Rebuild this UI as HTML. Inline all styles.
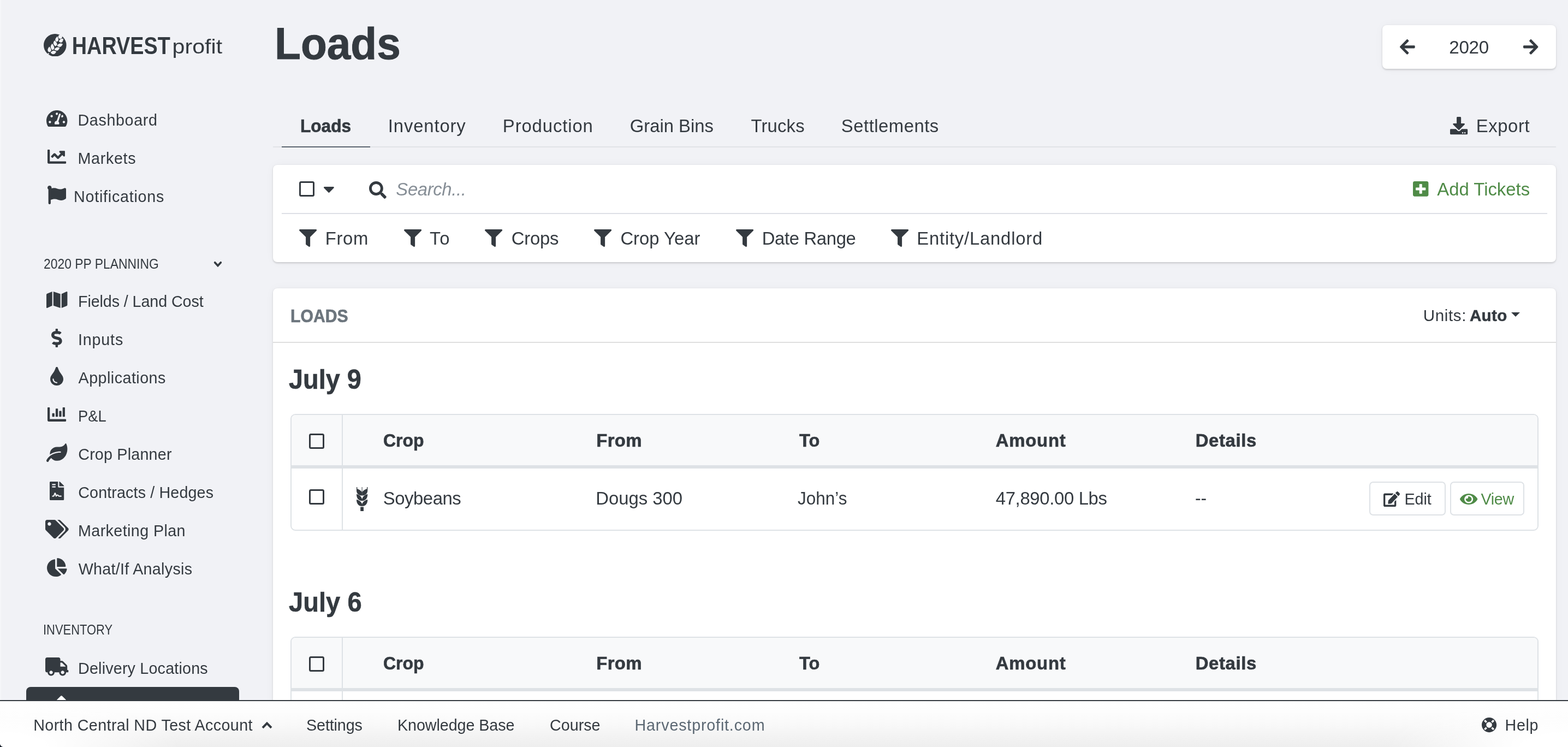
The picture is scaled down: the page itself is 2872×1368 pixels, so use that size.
<!DOCTYPE html>
<html lang="en">
<head>
<meta charset="utf-8">
<title>Loads - Harvest Profit</title>
<style>
*{box-sizing:border-box;margin:0;padding:0}
html,body{width:2872px;height:1368px;overflow:hidden}
body{position:relative;background:#f1f2f6;color:#343a40;font-family:"Liberation Sans",sans-serif;font-size:28px}
ul{list-style:none}
h1,h4{font-weight:700}
h6{font-weight:400;font-size:24px}
a{color:inherit;text-decoration:none}
.t{position:absolute;white-space:nowrap;line-height:1;display:block}
.i{position:absolute;display:block;overflow:visible}
#sidebar{position:absolute;left:0;top:0;width:500px;height:1282px;overflow:hidden}
#main{position:absolute;left:0;top:0;width:2872px;height:1282px;overflow:hidden}
#sidebar{z-index:2}
#sidebar,#main,#bottom{will-change:transform}
#logo_mark{position:absolute;left:80px;top:61.6px;width:41.6px;height:41.6px}
#logo_text{position:absolute;left:133.6px;top:61.8px;width:280px;height:50px;overflow:visible}
#active{position:absolute;left:48px;top:1258px;width:390px;height:60px;background:#343a40;border-radius:8px}
#active i{position:absolute;left:57.9px;top:18.4px;width:13px;height:13px;background:#fff;transform:rotate(45deg);border-radius:2px}
.card{position:absolute;background:#fff;border-radius:8px;box-shadow:0 1.5px 3.5px rgba(0,0,0,.17),0 0 18px rgba(0,0,0,.035)}
#yearbox{left:2532px;top:46px;width:318px;height:80px}
#tabline{position:absolute;left:500px;top:268px;width:2350px;height:2px;background:#e1e3e7}
#tabactive{position:absolute;left:516px;top:264px;width:162px;height:6px;border-bottom:2px solid #5c6670}
#filters{left:500px;top:302px;width:2350px;height:178px}
#fdiv{position:absolute;left:516px;top:390px;width:2318px;height:2px;background:#dde0e6}
#loads{left:500px;top:528px;width:2350px;height:800px;border-radius:8px 8px 0 0}
#ldiv{position:absolute;left:500px;top:626px;width:2350px;height:2px;background:#dfdfdf}
.chk{position:absolute;width:28px;height:28px;border:3px solid #343a40;border-radius:3.5px;display:block}
#chk_all{left:548px;top:332px}
#chk_h1{left:566px;top:794px}
#chk_r1{left:566px;top:896px}
#chk_h2{left:566px;top:1202px}
.table{position:absolute;left:532px;width:2286px;border:2px solid #dee2e6;border-radius:9px;overflow:hidden;background:#fff}
#table1{top:758px;height:214px}
#table2{top:1166px;height:300px}
.thead{position:absolute;left:0;top:0;width:100%;height:98px;background:#f8f9fa;border-bottom:6px solid #dee2e6}
.vline{position:absolute;left:92px;top:0;width:2px;height:100%;background:#dee2e6}
.btn{position:absolute;top:882px;height:62px;border:2px solid #dee2e6;border-radius:7px;background:#fff}
#btn_edit{left:2508px;width:140px}
#btn_view{left:2656px;width:136px}
#ucaret{position:absolute;left:2768.2px;top:572px;width:0;height:0;border-left:8.8px solid transparent;border-right:8.8px solid transparent;border-top:8.6px solid #343a40}
#i_wheat{left:653px;top:891.9px;width:20.3px;height:44px;fill:#343a40}
#bottom{position:absolute;left:0;top:1282px;width:2872px;height:86px;border-top:2px solid #343a40;overflow:hidden;z-index:5;background:radial-gradient(ellipse 330px 100px at 0% 100%,#fff 25%,rgba(255,255,255,0) 100%),radial-gradient(ellipse 330px 100px at 100% 100%,#fff 25%,rgba(255,255,255,0) 100%),linear-gradient(to bottom,#fff 0%,#fdfdfd 22%,#f9f9f9 50%,#f3f3f3 76%,#eeeeee 100%)}
#corner{position:absolute;left:0;bottom:0;width:7px;height:7px;background:radial-gradient(circle at 100% 0%,rgba(20,28,40,0) 6.6px,#141c28 7.6px)}
#edge{position:absolute;left:0;top:0;width:2px;height:1282px;background:#f5f6f9;z-index:3}
.chv{position:absolute;overflow:visible;fill:none;stroke:#343a40}
#s_dash{left:142.44px;top:206.00px;font-size:28.73px;letter-spacing:0.625px;}
#s_mark{left:142.44px;top:276.00px;font-size:28.73px;letter-spacing:0.669px;}
#s_noti{left:134.94px;top:346.00px;font-size:28.73px;letter-spacing:0.752px;}
#s_plan{left:79.72px;top:471.00px;font-size:24.91px;letter-spacing:0.000px;transform:scaleX(0.9190);transform-origin:0 0;}
#s_fld{left:143.02px;top:538.00px;font-size:28.73px;letter-spacing:-0.109px;}
#s_inp{left:143.02px;top:608.00px;font-size:28.73px;letter-spacing:0.800px;}
#s_app{left:143.52px;top:678.00px;font-size:28.73px;letter-spacing:0.457px;}
#s_pl{left:143.02px;top:748.00px;font-size:28.73px;letter-spacing:0.000px;transform:scaleX(0.9502);transform-origin:0 0;}
#s_crop{left:143.21px;top:818.00px;font-size:28.73px;letter-spacing:0.184px;}
#s_con{left:143.21px;top:888.00px;font-size:28.73px;letter-spacing:0.118px;}
#s_mkt{left:143.02px;top:958.00px;font-size:28.73px;letter-spacing:0.381px;}
#s_wif{left:143.67px;top:1028.00px;font-size:28.73px;letter-spacing:0.272px;}
#s_inv{left:78.96px;top:1141.00px;font-size:24.91px;letter-spacing:0.000px;transform:scaleX(0.8802);transform-origin:0 0;}
#s_del{left:143.02px;top:1209.60px;font-size:28.73px;letter-spacing:0.176px;}
#h1{left:503.00px;top:39.00px;font-size:82.08px;letter-spacing:0.000px;transform:scaleX(0.9551);transform-origin:0 0;font-weight:700;-webkit-text-stroke:0.98px;}
#yr{left:2654.25px;top:70.00px;font-size:33.22px;letter-spacing:-0.333px;}
#tab_loads{left:550.28px;top:215.00px;font-size:32.83px;letter-spacing:0.000px;transform:scaleX(0.9627);transform-origin:0 0;font-weight:700;-webkit-text-stroke:0.66px;}
#tab_inv{left:710.75px;top:215.00px;font-size:32.83px;letter-spacing:0.875px;}
#tab_prod{left:920.86px;top:215.00px;font-size:32.83px;letter-spacing:0.886px;}
#tab_bins{left:1153.75px;top:215.00px;font-size:32.83px;letter-spacing:-0.006px;}
#tab_trk{left:1375.38px;top:215.00px;font-size:32.83px;letter-spacing:0.200px;}
#tab_set{left:1540.86px;top:215.00px;font-size:32.83px;letter-spacing:0.500px;}
#export{left:2703.75px;top:215.00px;font-size:32.83px;letter-spacing:0.600px;}
#search{left:725.36px;top:331.00px;font-size:32.83px;letter-spacing:-0.360px;font-style:italic;color:#868e96;}
#addt{left:2632.36px;top:331.00px;font-size:32.83px;letter-spacing:-0.000px;color:#4f8b47;}
#f_from{left:595.80px;top:421.00px;font-size:32.83px;letter-spacing:0.666px;}
#f_to{left:786.88px;top:421.00px;font-size:32.83px;letter-spacing:2.000px;}
#f_crops{left:936.86px;top:421.00px;font-size:32.83px;letter-spacing:-0.250px;}
#f_cy{left:1136.38px;top:421.00px;font-size:32.83px;letter-spacing:-0.000px;}
#f_dr{left:1395.75px;top:421.00px;font-size:32.83px;letter-spacing:-0.345px;}
#f_el{left:1679.25px;top:421.00px;font-size:32.83px;letter-spacing:0.784px;}
#loads_h{left:532.30px;top:562.00px;font-size:33.22px;letter-spacing:0.000px;transform:scaleX(0.9085);transform-origin:0 0;font-weight:700;-webkit-text-stroke:0.66px;color:#6c757d;}
#units{left:2606.82px;top:563.00px;font-size:29.55px;letter-spacing:0.600px;}
#auto{left:2691.95px;top:563.00px;font-size:29.55px;letter-spacing:0.334px;font-weight:700;-webkit-text-stroke:0.59px;}
#july9{left:528.71px;top:670.00px;font-size:49.25px;letter-spacing:0.000px;transform:scaleX(0.9516);transform-origin:0 0;font-weight:700;-webkit-text-stroke:0.59px;}
#th1_crop{left:701.68px;top:791.00px;font-size:32.83px;letter-spacing:0.000px;transform:scaleX(0.9741);transform-origin:0 0;font-weight:700;-webkit-text-stroke:0.66px;}
#th1_from{left:1092.36px;top:791.00px;font-size:32.83px;letter-spacing:0.336px;font-weight:700;-webkit-text-stroke:0.66px;}
#th1_to{left:1464.36px;top:791.00px;font-size:32.83px;letter-spacing:0.000px;transform:scaleX(0.9883);transform-origin:0 0;font-weight:700;-webkit-text-stroke:0.66px;}
#th1_amt{left:1823.75px;top:791.00px;font-size:32.83px;letter-spacing:0.800px;font-weight:700;-webkit-text-stroke:0.66px;}
#th1_det{left:2189.68px;top:791.00px;font-size:32.83px;letter-spacing:0.665px;font-weight:700;-webkit-text-stroke:0.66px;}
#th2_crop{left:701.68px;top:1199.00px;font-size:32.83px;letter-spacing:0.000px;transform:scaleX(0.9741);transform-origin:0 0;font-weight:700;-webkit-text-stroke:0.66px;}
#th2_from{left:1092.36px;top:1199.00px;font-size:32.83px;letter-spacing:0.336px;font-weight:700;-webkit-text-stroke:0.66px;}
#th2_to{left:1464.36px;top:1199.00px;font-size:32.83px;letter-spacing:0.000px;transform:scaleX(0.9883);transform-origin:0 0;font-weight:700;-webkit-text-stroke:0.66px;}
#th2_amt{left:1823.75px;top:1199.00px;font-size:32.83px;letter-spacing:0.800px;font-weight:700;-webkit-text-stroke:0.66px;}
#th2_det{left:2189.68px;top:1199.00px;font-size:32.83px;letter-spacing:0.665px;font-weight:700;-webkit-text-stroke:0.66px;}
#td_soy{left:701.68px;top:897.00px;font-size:32.83px;letter-spacing:-0.420px;}
#td_dougs{left:1091.36px;top:897.00px;font-size:32.83px;letter-spacing:-0.015px;}
#td_john{left:1461.36px;top:897.00px;font-size:32.83px;letter-spacing:0.000px;transform:scaleX(0.9584);transform-origin:0 0;}
#td_amt{left:1823.75px;top:897.00px;font-size:32.83px;letter-spacing:-0.327px;}
#td_dd{left:2189.18px;top:897.00px;font-size:32.83px;letter-spacing:0.000px;transform:scaleX(0.9702);transform-origin:0 0;}
#edit{left:2572.39px;top:900.00px;font-size:28.73px;letter-spacing:-0.005px;}
#view{left:2712.52px;top:900.00px;font-size:28.73px;letter-spacing:-0.333px;color:#4f8b47;}
#july6{left:528.55px;top:1078.00px;font-size:49.25px;letter-spacing:0.000px;transform:scaleX(0.9573);transform-origin:0 0;font-weight:700;-webkit-text-stroke:0.59px;}
#b_acct{left:61.16px;top:30.00px;font-size:28.73px;letter-spacing:0.388px;}
#b_set{left:561.10px;top:30.00px;font-size:28.73px;letter-spacing:-0.140px;}
#b_kb{left:728.02px;top:30.00px;font-size:28.73px;letter-spacing:-0.085px;}
#b_course{left:1007.02px;top:30.00px;font-size:28.73px;letter-spacing:-0.000px;}
#b_hp{left:1162.51px;top:30.00px;font-size:28.73px;letter-spacing:0.814px;color:#5c6873;}
#b_help{left:2756.51px;top:30.00px;font-size:28.73px;letter-spacing:0.670px;}
#i_dash{left:84.70px;top:201.90px;width:38.40px;height:30.10px;fill:#343a40}
#i_mark{left:86.90px;top:274.10px;width:34.10px;height:25.70px;fill:#343a40}
#i_flag{left:87.30px;top:340.10px;width:34.00px;height:33.90px;fill:#343a40}
#i_map{left:84.70px;top:533.90px;width:38.40px;height:30.10px;fill:#343a40}
#i_dollar{left:94.10px;top:602.00px;width:19.70px;height:34.10px;fill:#343a40}
#i_tint{left:91.90px;top:671.80px;width:24.00px;height:34.10px;fill:#343a40}
#i_bar{left:86.90px;top:746.00px;width:34.10px;height:25.90px;fill:#343a40}
#i_leaf{left:84.70px;top:812.00px;width:38.40px;height:34.00px;fill:#343a40}
#i_file{left:90.80px;top:881.80px;width:26.20px;height:34.10px;fill:#343a40}
#i_tags{left:82.60px;top:952.10px;width:42.70px;height:34.10px;fill:#343a40}
#i_pie{left:85.80px;top:1022.00px;width:36.60px;height:34.10px;fill:#343a40}
#i_truck{left:82.60px;top:1204.40px;width:42.30px;height:33.60px;fill:#343a40}
#i_al{left:2564.30px;top:72.20px;width:27.70px;height:27.70px;fill:#343a40}
#i_ar{left:2790.30px;top:72.20px;width:27.40px;height:27.70px;fill:#343a40}
#i_dl{left:2656.00px;top:213.70px;width:32.20px;height:32.30px;fill:#343a40}
#i_caret{left:592.50px;top:342.00px;width:18.80px;height:11.00px;fill:#343a40}
#i_search{left:676.00px;top:331.90px;width:31.80px;height:31.90px;fill:#343a40}
#i_plus{left:2587.80px;top:332.00px;width:28.40px;height:27.80px;fill:#4f8b47}
#i_f0{left:547.80px;top:420.00px;width:32.20px;height:32.00px;fill:#343a40}
#i_f1{left:740.00px;top:420.00px;width:32.20px;height:32.00px;fill:#343a40}
#i_f2{left:887.90px;top:420.00px;width:32.20px;height:32.00px;fill:#343a40}
#i_f3{left:1087.80px;top:420.00px;width:32.20px;height:32.00px;fill:#343a40}
#i_f4{left:1348.20px;top:420.00px;width:32.20px;height:32.00px;fill:#343a40}
#i_f5{left:1632.10px;top:420.00px;width:32.20px;height:32.00px;fill:#343a40}
#i_edit{left:2534.00px;top:899.80px;width:30.00px;height:28.10px;fill:#343a40}
#i_eye{left:2674.00px;top:904.00px;width:32.30px;height:20.10px;fill:#4f8b47}
#i_ring{left:2714.20px;top:30.30px;width:27.20px;height:27.20px;fill:#343a40}
</style>
</head>
<body>
<nav id="sidebar">
<a id="logo"><svg id="logo_mark" viewBox="0 0 41.6 41.6"><circle cx="20.8" cy="20.8" r="20.8" fill="#343a40"/><g fill="#f1f2f6"><circle cx="30.3" cy="5.3" r="3.6"/><circle cx="8.6" cy="36.4" r="1.2"/><path d="M25.1 4.4Q17.8 11.7 24.2 14.6Q29.6 12.7 25.1 4.4ZM19.9 12.1Q15.0 18.0 21.3 22.7Q28.6 20.0 19.9 12.1ZM15.6 17.7Q9.8 24.0 16.1 29.8Q22.9 26.9 15.6 17.7ZM10.4 23.2Q4.2 29.9 10.0 33.5Q17.4 31.6 10.4 23.2ZM36.2 9.0Q30.0 7.8 27.7 13.9Q34.5 19.8 36.2 9.0ZM35.0 18.7Q29.1 15.2 24.4 21.4Q30.7 27.6 35.0 18.7ZM29.4 25.5Q24.1 22.4 19.2 28.2Q25.5 34.4 29.4 25.5ZM23.2 32.4Q17.1 28.4 12.6 34.4Q18.7 41.0 23.2 32.4Z"/></g></svg><svg id="logo_text" viewBox="0 0 280 50"><text x="-2.2" y="37.2" font-family="Liberation Sans, sans-serif" font-weight="700" font-size="44.6" textLength="180" lengthAdjust="spacingAndGlyphs" fill="#343a40">HARVEST</text><text x="181.6" y="36.4" font-family="Liberation Sans, sans-serif" font-size="36.2" textLength="91.5" lengthAdjust="spacingAndGlyphs" fill="#343a40">profit</text></svg></a>
<ul class="nav">
<li><a><svg class="i" id="i_dash" viewBox="0.00 32.00 576.00 448.00" preserveAspectRatio="none"><path d="M288 32C128.940 32 0 160.940 0 320c0 52.800 14.250 102.260 39.060 144.800 5.610 9.620 16.300 15.200 27.440 15.200h443c11.140 0 21.830-5.580 27.440-15.200C561.750 422.260 576 372.800 576 320c0-159.060-128.940-288-288-288zm0 64c14.710 0 26.580 10.130 30.320 23.650-1.110 2.260-2.640 4.230-3.450 6.670l-9.220 27.670c-5.130 3.490-10.970 6.010-17.640 6.010-17.670 0-32-14.330-32-32S270.330 96 288 96zM96 384c-17.670 0-32-14.330-32-32s14.330-32 32-32 32 14.330 32 32-14.330 32-32 32zm48-160c-17.670 0-32-14.330-32-32s14.330-32 32-32 32 14.330 32 32-14.330 32-32 32zm246.770-72.410l-61.330 184C343.130 347.330 352 364.540 352 384c0 11.720-3.380 22.550-8.880 32H232.880c-5.500-9.450-8.880-20.280-8.880-32 0-33.940 26.500-61.430 59.900-63.590l61.340-184.010c4.170-12.560 17.730-19.450 30.360-15.170 12.570 4.190 19.350 17.790 15.170 30.360zm14.660 57.200l15.520-46.550c3.470-1.290 7.130-2.230 11.050-2.230 17.670 0 32 14.330 32 32s-14.330 32-32 32c-11.380-.010-20.890-6.280-26.570-15.220zM480 384c-17.670 0-32-14.330-32-32s14.330-32 32-32 32 14.330 32 32-14.330 32-32 32z"/></svg><span class="t" id="s_dash">Dashboard</span></a></li>
<li><a><svg class="i" id="i_mark" viewBox="0.00 64.00 512.00 384.00" preserveAspectRatio="none"><path d="M496 384H64V80c0-8.840-7.160-16-16-16H16C7.160 64 0 71.160 0 80v336c0 17.670 14.330 32 32 32h464c8.840 0 16-7.160 16-16v-32c0-8.840-7.160-16-16-16zM464 96H345.940c-21.380 0-32.090 25.850-16.970 40.970l32.400 32.400L288 242.750l-73.370-73.370c-12.500-12.500-32.760-12.500-45.250 0l-68.690 68.690c-6.250 6.250-6.250 16.380 0 22.630l22.620 22.620c6.250 6.250 16.380 6.250 22.630 0L192 237.250l73.370 73.370c12.500 12.500 32.760 12.500 45.250 0l96-96 32.400 32.400c15.120 15.120 40.970 4.410 40.970-16.970V112c.010-8.840-7.150-16-15.990-16z"/></svg><span class="t" id="s_mark">Markets</span></a></li>
<li><a><svg class="i" id="i_flag" viewBox="8.00 0.00 504.00 512.00" preserveAspectRatio="none"><path d="M349.565 98.783C295.978 98.783 251.721 64 184.348 64c-24.955 0-47.309 4.384-68.045 12.013a55.947 55.947 0 0 0 3.586-23.562C118.117 24.015 94.806 1.206 66.338.048 34.345-1.254 8 24.296 8 56c0 19.026 9.497 35.825 24 45.945V488c0 13.255 10.745 24 24 24h16c13.255 0 24-10.745 24-24v-94.400c28.311-12.064 63.582-22.122 114.435-22.122 53.588 0 97.844 34.783 165.217 34.783 48.169 0 86.667-16.294 122.505-40.858C506.840 359.452 512 349.571 512 339.045v-243.100c0-23.393-24.269-38.870-45.485-29.016-34.338 15.948-76.454 31.854-116.950 31.854z"/></svg><span class="t" id="s_noti">Notifications</span></a></li>
</ul>
<h6><span class="t" id="s_plan">2020 PP PLANNING</span><svg class="chv" id="i_chev" style="left:380px;top:470px;width:40px;height:30px" viewBox="380 470 40 30"><path d="M393.6 480.7 L399 486.5 L404.4 480.7" stroke-width="3.6" stroke-linecap="round" stroke-linejoin="miter"/></svg></h6>
<ul class="nav">
<li><a><svg class="i" id="i_map" viewBox="0.00 32.00 576.00 448.00" preserveAspectRatio="none"><path d="M0 117.660v346.320c0 11.320 11.430 19.060 21.940 14.860L160 416V32L20.120 87.950A32.006 32.006 0 0 0 0 117.660zM192 416l192 64V96L192 32v384zM554.060 33.160L416 96v384l139.880-55.950A31.996 31.996 0 0 0 576 394.340V48.020c0-11.320-11.430-19.060-21.940-14.860z"/></svg><span class="t" id="s_fld">Fields / Land Cost</span></a></li>
<li><a><svg class="i" id="i_dollar" viewBox="0.04 0.00 287.94 512.00" preserveAspectRatio="none"><path d="M209.2 233.4l-108-31.600C88.700 198.200 80 186.500 80 173.500c0-16.300 13.200-29.500 29.500-29.500h66.300c12.200 0 24.200 3.700 34.200 10.500 6.100 4.100 14.300 3.100 19.500-2l34.800-34c7.100-6.900 6.100-18.400-1.800-24.500C238 74.800 207.400 64.100 176 64V16c0-8.800-7.200-16-16-16h-32c-8.800 0-16 7.200-16 16v48h-2.500C45.800 64-5.400 118.700.5 183.600c4.200 46.100 39.400 83.600 83.800 96.600l102.500 30c12.500 3.700 21.200 15.300 21.200 28.300 0 16.300-13.200 29.500-29.500 29.500h-66.300C100 368 88 364.300 78 357.500c-6.100-4.100-14.300-3.100-19.500 2l-34.800 34c-7.100 6.900-6.100 18.400 1.800 24.500 24.500 19.200 55.100 29.900 86.500 30v48c0 8.800 7.200 16 16 16h32c8.800 0 16-7.200 16-16v-48.200c46.600-.9 90.300-28.600 105.700-72.700 21.500-61.600-14.600-124.800-72.500-141.700z"/></svg><span class="t" id="s_inp">Inputs</span></a></li>
<li><a><svg class="i" id="i_tint" viewBox="0.00 -0.00 352.00 512.00" preserveAspectRatio="none"><path d="M205.22 22.090c-7.940-28.780-49.440-30.120-58.440 0C100.010 179.850 0 222.720 0 333.910 0 432.350 78.720 512 176 512s176-79.650 176-178.090c0-111.750-99.790-153.340-146.780-311.820zM176 448c-61.750 0-112-50.250-112-112 0-8.840 7.160-16 16-16s16 7.160 16 16c0 44.110 35.890 80 80 80 8.840 0 16 7.160 16 16s-7.160 16-16 16z"/></svg><span class="t" id="s_app">Applications</span></a></li>
<li><a><svg class="i" id="i_bar" viewBox="0.00 64.00 512.00 384.00" preserveAspectRatio="none"><path d="M332.8 320h38.400c6.400 0 12.800-6.400 12.800-12.800V172.800c0-6.400-6.400-12.800-12.800-12.800h-38.400c-6.400 0-12.800 6.400-12.800 12.800v134.400c0 6.400 6.400 12.800 12.800 12.800zm96 0h38.400c6.400 0 12.800-6.400 12.800-12.800V76.800c0-6.400-6.400-12.800-12.800-12.800h-38.400c-6.400 0-12.800 6.400-12.800 12.800v230.400c0 6.400 6.400 12.800 12.800 12.800zm-288 0h38.400c6.400 0 12.800-6.400 12.800-12.800v-70.400c0-6.400-6.400-12.800-12.800-12.800h-38.400c-6.400 0-12.800 6.400-12.800 12.800v70.400c0 6.400 6.400 12.800 12.800 12.800zm96 0h38.400c6.400 0 12.800-6.400 12.800-12.800V108.800c0-6.400-6.400-12.800-12.800-12.800h-38.400c-6.400 0-12.800 6.400-12.800 12.800v198.400c0 6.400 6.400 12.800 12.800 12.800zM496 384H64V80c0-8.840-7.160-16-16-16H16C7.160 64 0 71.160 0 80v336c0 17.670 14.330 32 32 32h464c8.840 0 16-7.160 16-16v-32c0-8.840-7.160-16-16-16z"/></svg><span class="t" id="s_pl">P&amp;L</span></a></li>
<li><a><svg class="i" id="i_leaf" viewBox="0.05 -0.02 575.95 512.07" preserveAspectRatio="none"><path d="M546.2 9.700c-5.600-12.500-21.600-13-28.300-1.200C486.900 62.400 431.400 96 368 96h-80C182 96 96 182 96 288c0 7 .800 13.700 1.500 20.500C161.300 262.800 253.400 224 384 224c8.800 0 16 7.200 16 16s-7.200 16-16 16C132.600 256 26 410.100 2.400 468c-6.600 16.300 1.200 34.900 17.500 41.600 16.400 6.800 35-1.100 41.800-17.300 1.500-3.600 20.900-47.900 71.900-90.600 32.400 43.900 94 85.800 174.900 77.200C465.500 467.500 576 326.700 576 154.300c0-50.200-10.800-102.200-29.800-144.600z"/></svg><span class="t" id="s_crop">Crop Planner</span></a></li>
<li><a><svg class="i" id="i_file" viewBox="0.00 0.00 384.00 512.00" preserveAspectRatio="none"><path d="M224 136V0H24C10.700 0 0 10.700 0 24v464c0 13.300 10.700 24 24 24h336c13.300 0 24-10.700 24-24V160H248c-13.200 0-24-10.800-24-24zM64 72c0-4.420 3.580-8 8-8h80c4.420 0 8 3.580 8 8v16c0 4.420-3.580 8-8 8H72c-4.420 0-8-3.580-8-8V72zm0 64c0-4.420 3.580-8 8-8h80c4.420 0 8 3.580 8 8v16c0 4.420-3.580 8-8 8H72c-4.420 0-8-3.580-8-8v-16zm192.810 248H304c8.840 0 16 7.160 16 16s-7.160 16-16 16h-47.190c-16.450 0-31.270-9.140-38.640-23.860-2.950-5.920-8.090-6.520-10.170-6.520s-7.220.590-10.020 6.190l-7.670 15.340a15.986 15.986 0 0 1-14.310 8.840c-.380 0-.750-.020-1.140-.050-6.450-.450-12-4.750-14.030-10.890L144 354.590l-10.610 31.880c-5.890 17.660-22.380 29.530-41 29.530H80c-8.840 0-16-7.160-16-16s7.160-16 16-16h12.390c4.830 0 9.110-3.080 10.640-7.660l18.190-54.640c3.300-9.810 12.440-16.410 22.780-16.410s19.480 6.590 22.770 16.410l13.880 41.640c19.770-16.190 54.050-9.700 66 14.160 2.020 4.060 5.960 6.500 10.160 6.500zM377 105L279.100 7c-4.500-4.500-10.600-7-17-7H256v128h128v-6.100c0-6.300-2.500-12.400-7-16.900z"/></svg><span class="t" id="s_con">Contracts / Hedges</span></a></li>
<li><a><svg class="i" id="i_tags" viewBox="0.00 0.00 640.00 512.00" preserveAspectRatio="none"><path d="M497.941 225.941L286.059 14.059A48 48 0 0 0 252.118 0H48C21.490 0 0 21.490 0 48v204.118a48 48 0 0 0 14.059 33.941l211.882 211.882c18.744 18.745 49.136 18.746 67.882 0l204.118-204.118c18.745-18.745 18.745-49.137 0-67.882zM112 160c-26.510 0-48-21.490-48-48s21.490-48 48-48 48 21.490 48 48-21.490 48-48 48zm513.941 133.823L421.823 497.941c-18.745 18.745-49.137 18.745-67.882 0l-.360-.360L527.640 323.522c16.999-16.999 26.360-39.600 26.360-63.640s-9.362-46.641-26.360-63.640L331.397 0h48.721a48 48 0 0 1 33.941 14.059l211.882 211.882c18.745 18.745 18.745 49.137 0 67.882z"/></svg><span class="t" id="s_mkt">Marketing Plan</span></a></li>
<li><a><svg class="i" id="i_pie" viewBox="-0.00 0.00 544.00 511.99" preserveAspectRatio="none"><path d="M527.79 288H290.500l158.030 158.030c6.040 6.040 15.980 6.530 22.190.680 38.700-36.460 65.320-85.610 73.130-140.860 1.340-9.460-6.510-17.850-16.060-17.850zm-15.830-64.800C503.720 103.740 408.260 8.280 288.800.040 279.680-.590 272 7.100 272 16.240V240h223.770c9.140 0 16.820-7.680 16.190-16.800zM224 288V50.710c0-9.550-8.390-17.400-17.840-16.060C86.990 51.490-4.100 155.600.140 280.370 4.500 408.510 114.830 513.590 243.030 511.980c50.400-.630 96.970-16.870 135.260-44.030 7.900-5.600 8.420-17.230 1.570-24.080L224 288z"/></svg><span class="t" id="s_wif">What/If Analysis</span></a></li>
</ul>
<h6><span class="t" id="s_inv">INVENTORY</span></h6>
<ul class="nav">
<li><a><svg class="i" id="i_truck" viewBox="0.00 0.00 640.00 512.00" preserveAspectRatio="none"><path d="M624 352h-16V243.900c0-12.700-5.100-24.900-14.100-33.900L494 110.100c-9-9-21.200-14.100-33.900-14.100H416V48c0-26.500-21.500-48-48-48H48C21.500 0 0 21.500 0 48v320c0 26.500 21.500 48 48 48h16c0 53 43 96 96 96s96-43 96-96h128c0 53 43 96 96 96s96-43 96-96h48c8.800 0 16-7.200 16-16v-32c0-8.800-7.200-16-16-16zM160 464c-26.500 0-48-21.500-48-48s21.500-48 48-48 48 21.500 48 48-21.500 48-48 48zm320 0c-26.500 0-48-21.500-48-48s21.500-48 48-48 48 21.500 48 48-21.500 48-48 48zm80-208H416V144h44.100l99.900 99.900V256z"/></svg><span class="t" id="s_del">Delivery Locations</span></a></li>
<li id="active"><i></i></li>
</ul>
</nav>
<main id="main">
<header><h1 class="t" id="h1">Loads</h1>
<div class="card" id="yearbox"></div><svg class="i" id="i_al" viewBox="-0.05 37.65 448.05 436.70" preserveAspectRatio="none"><path d="M257.5 445.1l-22.2 22.2c-9.4 9.4-24.6 9.4-33.9 0L7 273c-9.4-9.4-9.4-24.6 0-33.9L201.4 44.7c9.4-9.4 24.6-9.4 33.9 0l22.2 22.2c9.5 9.5 9.3 25-.4 34.3L136.6 216H424c13.3 0 24 10.7 24 24v32c0 13.3-10.7 24-24 24H136.6l120.5 114.8c9.8 9.3 10 24.8.4 34.3z"/></svg><span class="t" id="yr">2020</span><svg class="i" id="i_ar" viewBox="0.00 37.65 448.05 436.70" preserveAspectRatio="none"><path d="M190.5 66.9l22.2-22.2c9.4-9.4 24.6-9.4 33.9 0L441 239c9.4 9.4 9.4 24.6 0 33.9L246.6 467.3c-9.4 9.4-24.6 9.4-33.9 0l-22.2-22.2c-9.5-9.5-9.3-25 .4-34.3L311.4 296H24c-13.3 0-24-10.7-24-24v-32c0-13.3 10.7-24 24-24h287.4L190.9 101.2c-9.8-9.3-10-24.800-.4-34.3z"/></svg></header>
<div id="tabline"></div><div id="tabactive"></div>
<ul id="tabs"><li><span class="t" id="tab_loads">Loads</span></li><li><span class="t" id="tab_inv">Inventory</span></li><li><span class="t" id="tab_prod">Production</span></li><li><span class="t" id="tab_bins">Grain Bins</span></li><li><span class="t" id="tab_trk">Trucks</span></li><li><span class="t" id="tab_set">Settlements</span></li><li><svg class="i" id="i_dl" viewBox="0.00 0.00 512.00 512.00" preserveAspectRatio="none"><path d="M216 0h80c13.3 0 24 10.7 24 24v168h87.7c17.8 0 26.7 21.5 14.1 34.1L269.7 378.3c-7.5 7.5-19.8 7.5-27.3 0L90.1 226.1c-12.6-12.6-3.7-34.1 14.1-34.1H192V24c0-13.3 10.7-24 24-24zm296 376v112c0 13.3-10.7 24-24 24H24c-13.3 0-24-10.7-24-24V376c0-13.3 10.7-24 24-24h146.7l49 49c20.1 20.1 52.5 20.1 72.600 0l49-49H488c13.3 0 24 10.7 24 24zm-124 88c0-11-9-20-20-20s-20 9-20 20 9 20 20 20 20-9 20-20zm64 0c0-11-9-20-20-20s-20 9-20 20 9 20 20 20 20-9 20-20z"/></svg><span class="t" id="export">Export</span></li></ul>
<section class="card" id="filters"></section>
<i class="chk" id="chk_all"></i><svg class="i" id="i_caret" viewBox="11.30 192.00 297.31 168.65" preserveAspectRatio="none"><path d="M31.3 192h257.3c17.8 0 26.7 21.5 14.1 34.1L174.1 354.8c-7.8 7.8-20.5 7.8-28.3 0L17.2 226.1C4.6 213.500 13.5 192 31.3 192z"/></svg><svg class="i" id="i_search" viewBox="0.00 0.00 511.96 512.05" preserveAspectRatio="none"><path d="M505 442.7L405.3 343c-4.5-4.5-10.6-7-17-7H372c27.6-35.3 44-79.7 44-128C416 93.1 322.9 0 208 0S0 93.1 0 208s93.1 208 208 208c48.3 0 92.7-16.4 128-44v16.3c0 6.4 2.5 12.5 7 17l99.7 99.7c9.4 9.4 24.6 9.4 33.9 0l28.3-28.3c9.4-9.4 9.4-24.6.1-34zM208 336c-70.7 0-128-57.2-128-128 0-70.7 57.2-128 128-128 70.7 0 128 57.2 128 128 0 70.7-57.2 128-128 128z"/></svg><span class="t" id="search">Search...</span><svg class="i" id="i_plus" viewBox="0.00 32.00 448.00 448.00" preserveAspectRatio="none"><path d="M400 32H48C21.5 32 0 53.5 0 80v352c0 26.5 21.5 48 48 48h352c26.5 0 48-21.5 48-48V80c0-26.5-21.5-48-48-48zm-32 252c0 6.600-5.4 12-12 12h-92v92c0 6.600-5.4 12-12 12h-56c-6.600 0-12-5.400-12-12v-92H92c-6.600 0-12-5.400-12-12v-56c0-6.600 5.400-12 12-12h92v-92c0-6.600 5.400-12 12-12h56c6.600 0 12 5.400 12 12v92h92c6.600 0 12 5.400 12 12v56z"/></svg><span class="t" id="addt">Add Tickets</span>
<div id="fdiv"></div>
<svg class="i" id="i_f0" viewBox="0.00 0.00 512.00 512.00" preserveAspectRatio="none"><path d="M487.976 0H24.028C2.71 0-8.047 25.866 7.058 40.971L192 225.941V432c0 7.831 3.821 15.17 10.237 19.662l80 55.98C298.02 518.69 320 507.493 320 487.98V225.941l184.947-184.97C520.021 25.896 509.338 0 487.976 0z"/></svg><span class="t" id="f_from">From</span>
<svg class="i" id="i_f1" viewBox="0.00 0.00 512.00 512.00" preserveAspectRatio="none"><path d="M487.976 0H24.028C2.71 0-8.047 25.866 7.058 40.971L192 225.941V432c0 7.831 3.821 15.17 10.237 19.662l80 55.98C298.02 518.69 320 507.493 320 487.98V225.941l184.947-184.97C520.021 25.896 509.338 0 487.976 0z"/></svg><span class="t" id="f_to">To</span>
<svg class="i" id="i_f2" viewBox="0.00 0.00 512.00 512.00" preserveAspectRatio="none"><path d="M487.976 0H24.028C2.71 0-8.047 25.866 7.058 40.971L192 225.941V432c0 7.831 3.821 15.17 10.237 19.662l80 55.98C298.02 518.69 320 507.493 320 487.98V225.941l184.947-184.97C520.021 25.896 509.338 0 487.976 0z"/></svg><span class="t" id="f_crops">Crops</span>
<svg class="i" id="i_f3" viewBox="0.00 0.00 512.00 512.00" preserveAspectRatio="none"><path d="M487.976 0H24.028C2.71 0-8.047 25.866 7.058 40.971L192 225.941V432c0 7.831 3.821 15.17 10.237 19.662l80 55.98C298.02 518.69 320 507.493 320 487.98V225.941l184.947-184.97C520.021 25.896 509.338 0 487.976 0z"/></svg><span class="t" id="f_cy">Crop Year</span>
<svg class="i" id="i_f4" viewBox="0.00 0.00 512.00 512.00" preserveAspectRatio="none"><path d="M487.976 0H24.028C2.71 0-8.047 25.866 7.058 40.971L192 225.941V432c0 7.831 3.821 15.17 10.237 19.662l80 55.98C298.02 518.69 320 507.493 320 487.98V225.941l184.947-184.97C520.021 25.896 509.338 0 487.976 0z"/></svg><span class="t" id="f_dr">Date Range</span>
<svg class="i" id="i_f5" viewBox="0.00 0.00 512.00 512.00" preserveAspectRatio="none"><path d="M487.976 0H24.028C2.71 0-8.047 25.866 7.058 40.971L192 225.941V432c0 7.831 3.821 15.17 10.237 19.662l80 55.98C298.02 518.69 320 507.493 320 487.98V225.941l184.947-184.97C520.021 25.896 509.338 0 487.976 0z"/></svg><span class="t" id="f_el">Entity/Landlord</span>
<section class="card" id="loads"></section>
<span class="t" id="loads_h">LOADS</span><span class="t" id="units">Units:</span><span class="t" id="auto">Auto</span><i id="ucaret"></i>
<div id="ldiv"></div>
<h4 class="t" id="july9">July 9</h4>
<div class="table" id="table1"><div class="thead"></div><div class="vline"></div></div>
<i class="chk" id="chk_h1"></i><span class="t" id="th1_crop">Crop</span><span class="t" id="th1_from">From</span><span class="t" id="th1_to">To</span><span class="t" id="th1_amt">Amount</span><span class="t" id="th1_det">Details</span>
<i class="chk" id="chk_r1"></i><svg class="i" id="i_wheat" viewBox="0 0 20.3 44"><rect x="9.3" y="0" width="1.7" height="10" fill="#8d9195"/><g id="wl"><path d="M0,0 L1.3,0 L1.3,3.2 C5,4 8.6,6.6 10.15,9.8 L10.15,15.6 C3.5,15.6 0,11.5 0,6 Z"/><path d="M0,13 C4.5,13.6 8.8,17 10.15,22 L10.15,25.2 C3.8,25.2 0,20.5 0,13 Z"/><path d="M0,23 C4.5,23.6 8.8,27 10.15,31 L10.15,35 C3.8,35 0,30.5 0,23 Z"/></g><use href="#wl" transform="translate(20.3,0) scale(-1,1)"/><rect x="7.2" y="36.4" width="5.8" height="7.6"/></svg><span class="t" id="td_soy">Soybeans</span><span class="t" id="td_dougs">Dougs 300</span><span class="t" id="td_john">John’s</span><span class="t" id="td_amt">47,890.00 Lbs</span><span class="t" id="td_dd">--</span>
<div class="btn" id="btn_edit"></div><svg class="i" id="i_edit" viewBox="0.00 0.10 576.00 511.90" preserveAspectRatio="none"><path d="M402.6 83.2l90.2 90.2c3.8 3.8 3.8 10 0 13.8L274.400 405.600l-92.800 10.300c-12.400 1.400-22.900-9.100-21.500-21.500l10.300-92.800L388.800 83.200c3.800-3.800 10-3.800 13.800 0zm162-22.900l-48.800-48.800c-15.200-15.200-39.900-15.200-55.200 0l-35.400 35.400c-3.800 3.800-3.800 10 0 13.800l90.200 90.200c3.800 3.800 10 3.800 13.800 0l35.400-35.400c15.200-15.300 15.200-40 0-55.200zM384 346.200V448H64V128h229.800c3.200 0 6.200-1.300 8.500-3.500l40-40c7.600-7.600 2.200-20.500-8.500-20.500H48C21.500 64 0 85.500 0 112v352c0 26.500 21.500 48 48 48h352c26.500 0 48-21.500 48-48V306.200c0-10.700-12.900-16-20.500-8.500l-40 40c-2.200 2.300-3.500 5.300-3.500 8.500z"/></svg><span class="t" id="edit">Edit</span><div class="btn" id="btn_view"></div><svg class="i" id="i_eye" viewBox="0.00 64.00 576.00 384.00" preserveAspectRatio="none"><path d="M572.52 241.4C518.29 135.59 410.93 64 288 64S57.68 135.64 3.48 241.41a32.350 32.350 0 0 0 0 29.190C57.71 376.410 165.070 448 288 448s230.320-71.640 284.520-177.410a32.350 32.350 0 0 0 0-29.190zM288 400a144 144 0 1 1 144-144 143.930 143.930 0 0 1-144 144zm0-240a95.310 95.310 0 0 0-25.310 3.790 47.850 47.850 0 0 1-66.900 66.900A95.780 95.780 0 1 0 288 160z"/></svg><span class="t" id="view">View</span>
<h4 class="t" id="july6">July 6</h4>
<div class="table" id="table2"><div class="thead"></div><div class="vline"></div></div>
<i class="chk" id="chk_h2"></i><span class="t" id="th2_crop">Crop</span><span class="t" id="th2_from">From</span><span class="t" id="th2_to">To</span><span class="t" id="th2_amt">Amount</span><span class="t" id="th2_det">Details</span>
</main>
<footer id="bottom"><div id="corner"></div><span class="t" id="b_acct">North Central ND Test Account</span><svg class="chv" id="i_chevup" style="left:470px;top:30px;width:40px;height:30px" viewBox="470 1314 40 30"><path d="M482.4 1331.3 L489 1324.7 L495.6 1331.3" stroke-width="4" stroke-linecap="square" stroke-linejoin="miter"/></svg><span class="t" id="b_set">Settings</span><span class="t" id="b_kb">Knowledge Base</span><span class="t" id="b_course">Course</span><span class="t" id="b_hp">Harvestprofit.com</span><svg class="i" id="i_ring" viewBox="8.00 8.00 496.00 496.00" preserveAspectRatio="none"><path d="M256 8C119.033 8 8 119.033 8 256s111.033 248 248 248 248-111.033 248-248S392.967 8 256 8zm173.696 119.559l-63.399 63.399c-10.987-18.559-26.670-34.252-45.255-45.255l63.399-63.399a218.396 218.396 0 0 1 45.255 45.255zM256 352c-53.019 0-96-42.981-96-96s42.981-96 96-96 96 42.981 96 96-42.981 96-96 96zM127.559 82.304l63.399 63.399c-18.559 10.987-34.252 26.670-45.255 45.255l-63.399-63.399a218.372 218.372 0 0 1 45.255-45.255zM82.304 384.441l63.399-63.399c10.987 18.559 26.670 34.252 45.255 45.255l-63.399 63.399a218.396 218.396 0 0 1-45.255-45.255zm302.137 45.255l-63.399-63.399c18.559-10.987 34.252-26.670 45.255-45.255l63.399 63.399a218.403 218.403 0 0 1-45.255 45.255z"/></svg><span class="t" id="b_help">Help</span></footer>
<div id="edge"></div>
</body>
</html>
